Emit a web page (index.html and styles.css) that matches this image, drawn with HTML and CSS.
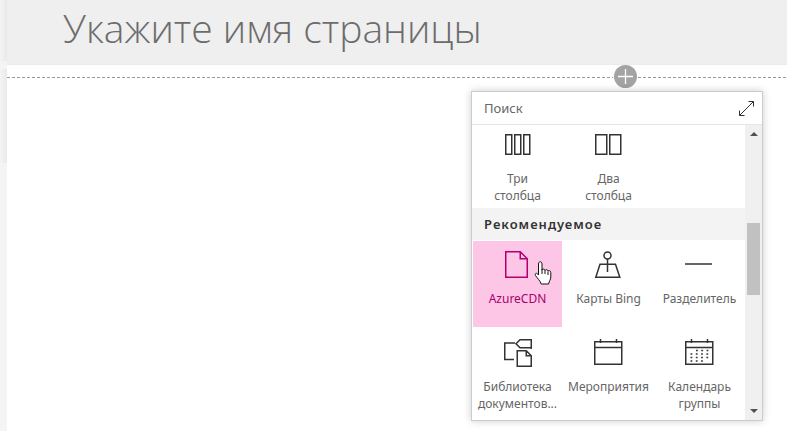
FILE: index.html
```html
<!DOCTYPE html>
<html lang="ru">
<head>
<meta charset="utf-8">
<title>Новая страница</title>
<link rel="stylesheet" href="styles.css">
</head>
<body>
<div class="gutter"><div class="edge edge-head"></div><div class="edge edge-body"></div></div>
<main class="page">
  <header class="title-area">
    <input class="page-title" type="text" placeholder="Укажите имя страницы" aria-label="Имя страницы">
  </header>
  <section class="canvas">
    <div class="insert-row">
      <span class="dash"></span>
      <button class="add" type="button" aria-label="Добавить веб-часть"><svg width="23" height="23" viewBox="0 0 23 23"><circle cx="11.500" cy="11.500" r="11.500" fill="#a3a3a3"/><path d="M11.500 4v15M4 11.500h15" stroke="#fff" stroke-width="1.300"/></svg></button>
      <span class="dash"></span>
    </div>
    <div class="toolbox">
      <div class="search">
        <input class="search-box" type="text" placeholder="Поиск" aria-label="Поиск">
        <button class="expand" type="button" aria-label="Развернуть"><svg width="15" height="15" viewBox="0 0 15 15" fill="none" stroke="#333"><path d="M.500 14.500 14.500.500M9.500.500h5v5M.500 9.500v5h5"/></svg></button>
      </div>
      <div class="body">
        <div class="list">
          <div class="tiles layouts">
            <button class="tile" type="button"><svg width="30" height="30" viewBox="0 0 30 30"><path d="M2.750 4.750h6v19.500h-6zM11.750 4.750h6v19.500h-6zM20.750 4.750h6v19.500h-6z"/></svg><span>Три столбца</span></button>
            <button class="tile" type="button"><svg width="30" height="30" viewBox="0 0 30 30"><path d="M1.750 4.750h11v19.500h-11zM15.750 4.750h11v19.500h-11z"/></svg><span>Два столбца</span></button>
          </div>
          <h2 class="group">Рекомендуемое</h2>
          <div class="tiles">
            <button class="tile selected" type="button"><svg width="30" height="30" viewBox="0 0 30 30"><path d="M2.750 1.750h14.500l7 7v18.500H2.750zM17.250 1.750v7h7"/></svg><span>AzureCDN</span>
              <svg class="cursor" width="18" height="24" viewBox="0 0 18 24"><path d="M4.500 14V3c0-3 3.500-3 3.500 0v6c.500-1.500 3-1.200 3 .500.500-1.300 3-1 3 .700.600-1 2.800-.700 2.800 1.300V16c0 3-1.800 4-2.200 7H7.200c-.700-3-4.200-6-5.700-8.500-1-2 1-3 2.200-1.500z"/><path d="M8 8v5M11 9.500V13M14 10.500V14"/></svg></button>
            <button class="tile" type="button"><svg width="30" height="30" viewBox="0 0 30 30"><circle cx="13.500" cy="5.500" r="3.500"/><path d="M13.500 9v13M6 14.250h15.500l4.300 13h-24z"/></svg><span>Карты Bing</span></button>
            <button class="tile" type="button"><svg width="30" height="30" viewBox="0 0 30 30"><path d="M0 14h27"/></svg><span>Разделитель</span></button>
            <button class="tile" type="button"><svg width="30" height="30" viewBox="0 0 30 30"><path d="M11 21.500H1.750v-16.500H12M28.250 11V1.750H17l-4 4 4 4h11.250M14.250 12.750h9l5 5v10.500h-14zM23.250 12.750v5h5"/></svg><span>Библиотека документов...</span></button>
            <button class="tile" type="button"><svg width="30" height="30" viewBox="0 0 30 30"><path d="M.750 3.750h27v22.500h-27zM.750 9.500h27M6.500 1v4M22.500 1v4"/></svg><span>Мероприятия</span></button>
            <button class="tile" type="button"><svg width="30" height="30" viewBox="0 0 30 30"><path d="M.750 3.750h27v22.500h-27zM.750 9.500h27M6.500 1v4M22.500 1v4"/><path d="M11 12.500h12.500M5.500 16h18M5.500 19.500h18M5.500 23h12.500" stroke-dasharray="1.800 3.500"/></svg><span>Календарь группы</span></button>
          </div>
        </div>
        <div class="scrollbar"><span class="arrow up"></span><span class="thumb"></span><span class="arrow down"></span></div>
      </div>
    </div>
  </section>
</main>
</body>
</html>
```
FILE: styles.css
```css
* { box-sizing: border-box; }
body {
  margin: 0;
  min-height: 100vh;
  display: flex;
  overflow: hidden;
  background: #fff;
  font-family: "Noto Sans", "Open Sans", sans-serif;
  color: #666;
}
button, input { font: inherit; color: inherit; border: 0; padding: 0; background: none; outline: 0; }
button { cursor: pointer; }
svg { display: block; }
.gutter { width: 7px; flex: none; background: #f4f4f4; }
.edge { background: linear-gradient(90deg, transparent, #e9e9e9); }
.edge-head { height: 61px; }
.edge-body { height: 94px; margin-top: 8px; }
.page { flex: 1; min-width: 0; display: flex; flex-direction: column; }
.title-area { background: #efefef; height: 65px; padding: 0 56px; border-bottom: 1px solid #ebebeb; }
.page-title { display: block; width: 100%; height: 54px; font-family: "Open Sans", sans-serif; font-weight: 300; font-size: 39px; }
.page-title::placeholder { color: #6c6c6c; opacity: 1; }
.canvas { position: relative; flex: 1; }
.insert-row { display: flex; align-items: center; gap: 1px; height: 23px; }
.dash { height: 1px; flex: 1; margin-top: 2px; background: repeating-linear-gradient(90deg, #999 0 3px, transparent 3px 5px); }
.dash:last-child { flex: 0 0 149px; }
.add { border-radius: 50%; }
.toolbox {
  position: absolute;
  top: 26px;
  right: 24px;
  width: 292px;
  background: #fff;
  border: 1px solid #ccc;
  box-shadow: 0 0 8px rgba(0, 0, 0, .2);
}
.search { display: flex; align-items: center; height: 33px; padding: 0 8px 0 12px; border-bottom: 1px solid #e5e5e5; }
.search-box { flex: 1; min-width: 0; font-size: 13px; }
.search-box::placeholder { color: #666; opacity: 1; }
.body { display: flex; height: 295px; }
.list { flex: 1; min-width: 0; overflow: hidden; }
.tiles { display: grid; grid-template-columns: repeat(3, 1fr); gap: 2px; padding: 1px; }
.layouts { height: 83px; padding-top: 0; align-items: end; }
.tile {
  position: relative;
  height: 86px;
  display: flex;
  flex-direction: column;
  align-items: center;
  padding-top: 9px;
  font-size: 12px;
  line-height: 17px;
}
.tile svg { fill: none; stroke: #333; stroke-width: 1.500; }
.tile span { margin-top: 10px; padding: 0 2px; }
.layouts .tile { height: 82px; padding-top: 5px; }
.layouts .tile span { padding: 0 16px; }
.selected { background: #fdc6e7; color: #a80069; }
.selected svg { stroke: #b4006f; }
.tile .cursor { position: absolute; left: 61px; top: 20px; fill: #fff; stroke: #111; stroke-width: 1; }
.group { margin: 0; height: 32px; padding-left: 12px; background: #f3f3f3; color: #333; font-size: 13px; font-weight: 600; line-height: 32px; letter-spacing: 1px; }
.scrollbar { width: 17px; background: #f0f0f0; display: flex; flex-direction: column; align-items: center; padding: 7px 0; }
.arrow { border: 4px solid transparent; }
.up { border-top: 0; border-bottom-color: #505050; }
.down { border-bottom: 0; border-top-color: #505050; margin-top: auto; }
.thumb { width: 13px; height: 72px; margin-top: 87px; background: #c1c1c1; }
```
